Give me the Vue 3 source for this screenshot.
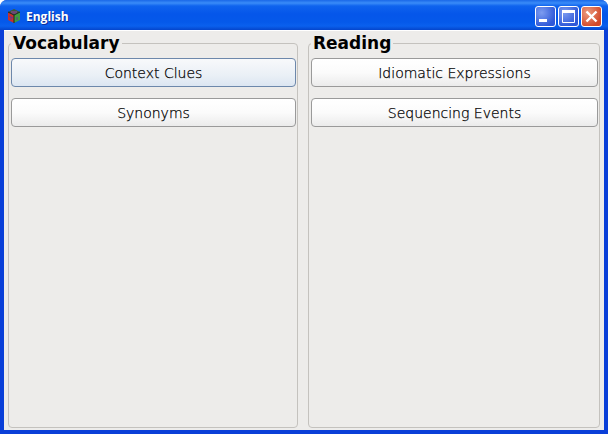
<template>
  <div class="window">
    <!-- Titelleiste -->
    <div class="titlebar">
      <svg class="app-icon" width="16" height="16" viewBox="0 0 16 16">
        <path d="M8 1 L14 4 L8 7 L2 4 Z" fill="#3c5a3c" />
        <path d="M2 4 L8 7 L8 15 L2 12 Z" fill="#c9302c" />
        <path d="M14 4 L8 7 L8 15 L14 12 Z" fill="#3f9a3f" />
        <path d="M5 3 L11 3 L11 6 L5 6 Z" fill="#8a3f9a" opacity="0.6" />
        <path d="M5 9 L5 12 M11 9 L11 12 M3 8 L7 10" stroke="#5a3a9a" stroke-width="1" fill="none" />
        <path d="M8 7 L8 15 M2 4 L8 7 L14 4" stroke="#1d2b1d" stroke-width="1" fill="none" />
      </svg>
      <span class="title">{{ title }}</span>
      <div class="controls">
        <button class="ctl">
          <svg width="21" height="21" viewBox="0 0 21 21"><rect x="4" y="13" width="8" height="3" fill="#fff" /></svg>
        </button>
        <button class="ctl">
          <svg width="21" height="21" viewBox="0 0 21 21"><path d="M4.5 6.5h12v10h-12z" fill="none" stroke="#fff" /><rect x="4" y="4" width="13" height="3" fill="#fff" /></svg>
        </button>
        <button class="ctl close">
          <svg width="21" height="21" viewBox="0 0 21 21"><path d="M5.5 5.5 L15.5 15.5 M15.5 5.5 L5.5 15.5" stroke="#fff" stroke-width="2.4" /></svg>
        </button>
      </div>
    </div>

    <!-- Inhalt -->
    <div class="content">
      <fieldset v-for="group in groups" :key="group.name" class="group">
        <legend>{{ group.name }}</legend>
        <button
          v-for="(item, i) in group.items"
          :key="item"
          class="topic"
          :class="{ focused: group.name === 'Vocabulary' && i === 0 }"
        >
          {{ item }}
        </button>
      </fieldset>
    </div>
  </div>
</template>

<script setup>
const title = 'English';

const groups = [
  { name: 'Vocabulary', items: ['Context Clues', 'Synonyms'] },
  { name: 'Reading', items: ['Idiomatic Expressions', 'Sequencing Events'] },
];
</script>

<style>
html, body {
  margin: 0;
  background: #fff;
}
</style>

<style scoped>
.window {
  width: 608px;
  height: 434px;
  box-sizing: border-box;
  padding: 0 4px 4px;
  display: flex;
  flex-direction: column;
  border-radius: 7px 7px 0 0;
  background: #0a3fd8;
  font-family: "DejaVu Sans", sans-serif;
  overflow: hidden;
}

.titlebar {
  height: 30px;
  flex: none;
  margin: 0 -4px;
  padding: 3px 6px 0 6px;
  box-sizing: border-box;
  display: flex;
  align-items: center;
  background: linear-gradient(to bottom, #1a68e8 0, #3a8cf8 3px, #0f63ee 6px, #0556ea 14px, #0559ea 22px, #0a60ee 26px, #0445cc 30px);
}

.app-icon {
  flex: none;
  margin-top: -2px;
}

.title {
  margin-left: 4px;
  color: #fff;
  font-family: "Open Sans", sans-serif;
  font-size: 12px;
  font-weight: 700;
  text-shadow: 1px 1px 0 #0f2f9a;
}

.controls {
  margin-left: auto;
  display: flex;
  gap: 2px;
}

.ctl {
  width: 19px;
  height: 19px;
  padding: 0;
  border: 1px solid #fff;
  border-radius: 3px;
  background: radial-gradient(circle at 30% 30%, #7d9cf0, #2e58d8 75%);
  box-sizing: content-box;
  overflow: hidden;
  display: block;
}

.ctl svg {
  display: block;
  margin: -1px;
}

.close {
  background: radial-gradient(circle at 30% 30%, #eb9c80, #d2492a 75%);
}

.content {
  flex: 1;
  display: grid;
  grid-template-columns: 290px 292px;
  gap: 10px;
  padding: 0 4px 2px;
  background: #edecea;
  box-shadow: inset 0 1px 0 #fff;
}

.group {
  margin: 0;
  min-width: 0;
  padding: 1px 1px 0 2px;
  border: 1px solid #c4c2be;
  border-radius: 4px;
  display: flex;
  flex-direction: column;
  gap: 11px;
}

legend {
  margin-left: 0;
  padding: 0 2px;
  color: #000;
  font-size: 17px;
  font-weight: 700;
  line-height: 27px;
}

.topic {
  height: 29px;
  padding: 0;
  border: 1px solid #9a9a9a;
  border-radius: 4px;
  background: linear-gradient(to bottom, #fff 0, #fbfbfb 50%, #ebebeb 100%);
  color: #000;
  font-family: "DejaVu Sans", sans-serif;
  font-size: 14px;
  font-weight: 200;
  -webkit-text-stroke: 0.25px #000;
}

.topic.focused {
  border-color: #6d88ab;
  background: linear-gradient(to bottom, #f8f9fb 0, #eaf0f6 60%, #dce6f2 100%);
}
</style>
